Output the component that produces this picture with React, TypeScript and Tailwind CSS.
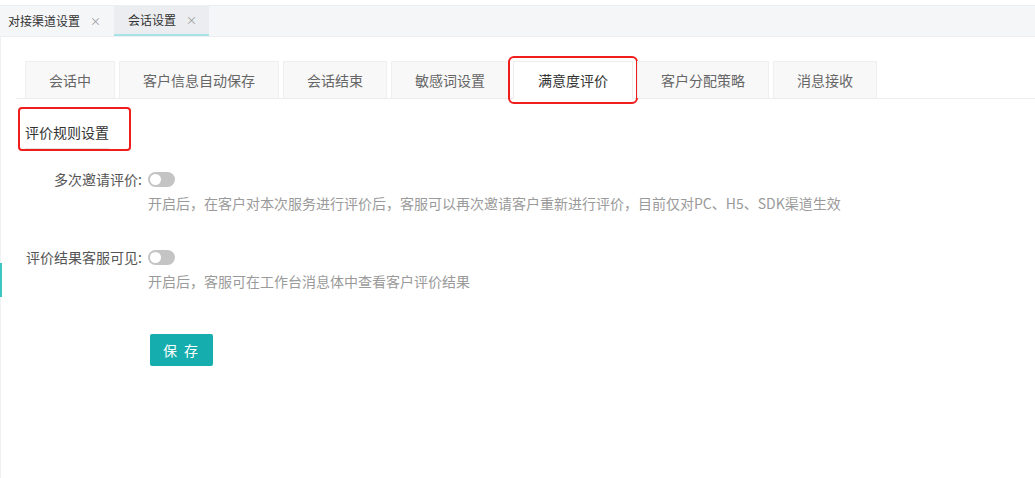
import React from 'react'

const font = { fontFamily: '"Noto Sans CJK SC", "Noto Sans", sans-serif' }

const pageTabs = [
  { label: '对接渠道设置', active: false },
  { label: '会话设置', active: true },
]

const innerTabs = ['会话中', '客户信息自动保存', '会话结束', '敏感词设置', '满意度评价', '客户分配策略', '消息接收']
const activeTab = '满意度评价'

function Toggle() {
  return (
    <span className="inline-flex h-[15px] w-[27px] items-center rounded-full bg-[#c4c4c4] px-[2px]">
      <span className="h-[11px] w-[11px] rounded-full bg-white" />
    </span>
  )
}

function SettingRow({ label, desc }: { label: string; desc: string }) {
  return (
    <div className="flex">
      <div className="mr-[6px] w-[124px] shrink-0 text-right text-[14px] leading-[20px] text-[#555]">{label}:</div>
      <div className="flex flex-col">
        <div className="flex h-[20px] items-center">
          <Toggle />
        </div>
        <div className="mt-[4px] text-[14px] leading-[20px] text-[#9a9a9a]">{desc}</div>
      </div>
    </div>
  )
}

export default function App() {
  return (
    <div className="h-[478px] w-[1035px] overflow-hidden bg-white pt-[5px]" style={font}>
      {/* page tabs */}
      <div className="flex h-[32px] border-t border-b border-[#eceef1] bg-[#f5f6f8]">
        {pageTabs.map((t) => (
          <div
            key={t.label}
            className={`flex items-center text-[12px] ${
              t.active
                ? 'border-b-2 border-[#a6e3e4] bg-[#ebedf0] pl-[14px] pr-[12px] text-[#333]'
                : 'pl-[8px] pr-[13px] text-[#333]'
            }`}
          >
            <span>{t.label}</span>
            <span className="ml-[10px] text-[11px] text-[#999]">×</span>
          </div>
        ))}
      </div>

      {/* body */}
      <div className="relative h-[441px] border-l border-[#eef0f3] pl-[15px] pt-[24px]">
        <span className="absolute left-[-1px] top-[226px] h-[34px] w-[2px] bg-[#3cc7c4]" />

        <div className="flex gap-[4px] border-b border-[#ececec] pl-[9px]">
          {innerTabs.map((t) =>
            t === activeTab ? (
              <div
                key={t}
                className="-mb-px flex h-[38px] items-center rounded-[1px] border border-b-0 border-[#ececec] bg-white px-[24px] text-[14px] text-[#333] outline-2 outline-offset-[3px] outline-[#f01d1d]"
              >
                {t}
              </div>
            ) : (
              <div
                key={t}
                className="flex h-[37px] items-center border border-b-0 border-[#efefef] bg-[#f8f8f8] px-[23px] text-[14px] text-[#666]"
              >
                {t}
              </div>
            )
          )}
        </div>

        <div className="mt-[8px] ml-[2px] flex h-[44px] w-[113px] rounded-[4px] border-2 border-[#f01d1d] pl-[5px]">
          <span className="h-[40px] border-b border-[#e3e3e3] pt-[13px] text-[14px] leading-[20px] text-[#333]">评价规则设置</span>
        </div>

        <div className="ml-[2px] mt-[18px] flex flex-col gap-[34px]">
          <SettingRow
            label="多次邀请评价"
            desc="开启后，在客户对本次服务进行评价后，客服可以再次邀请客户重新进行评价，目前仅对PC、H5、SDK渠道生效"
          />
          <SettingRow label="评价结果客服可见" desc="开启后，客服可在工作台消息体中查看客户评价结果" />
        </div>

        <div className="ml-[134px] mt-[43px]">
          <button className="h-[32px] w-[63px] rounded-[2px] bg-[#15adad] text-[14px] tracking-[2px] text-white">
            保 存
          </button>
        </div>
      </div>
    </div>
  )
}
